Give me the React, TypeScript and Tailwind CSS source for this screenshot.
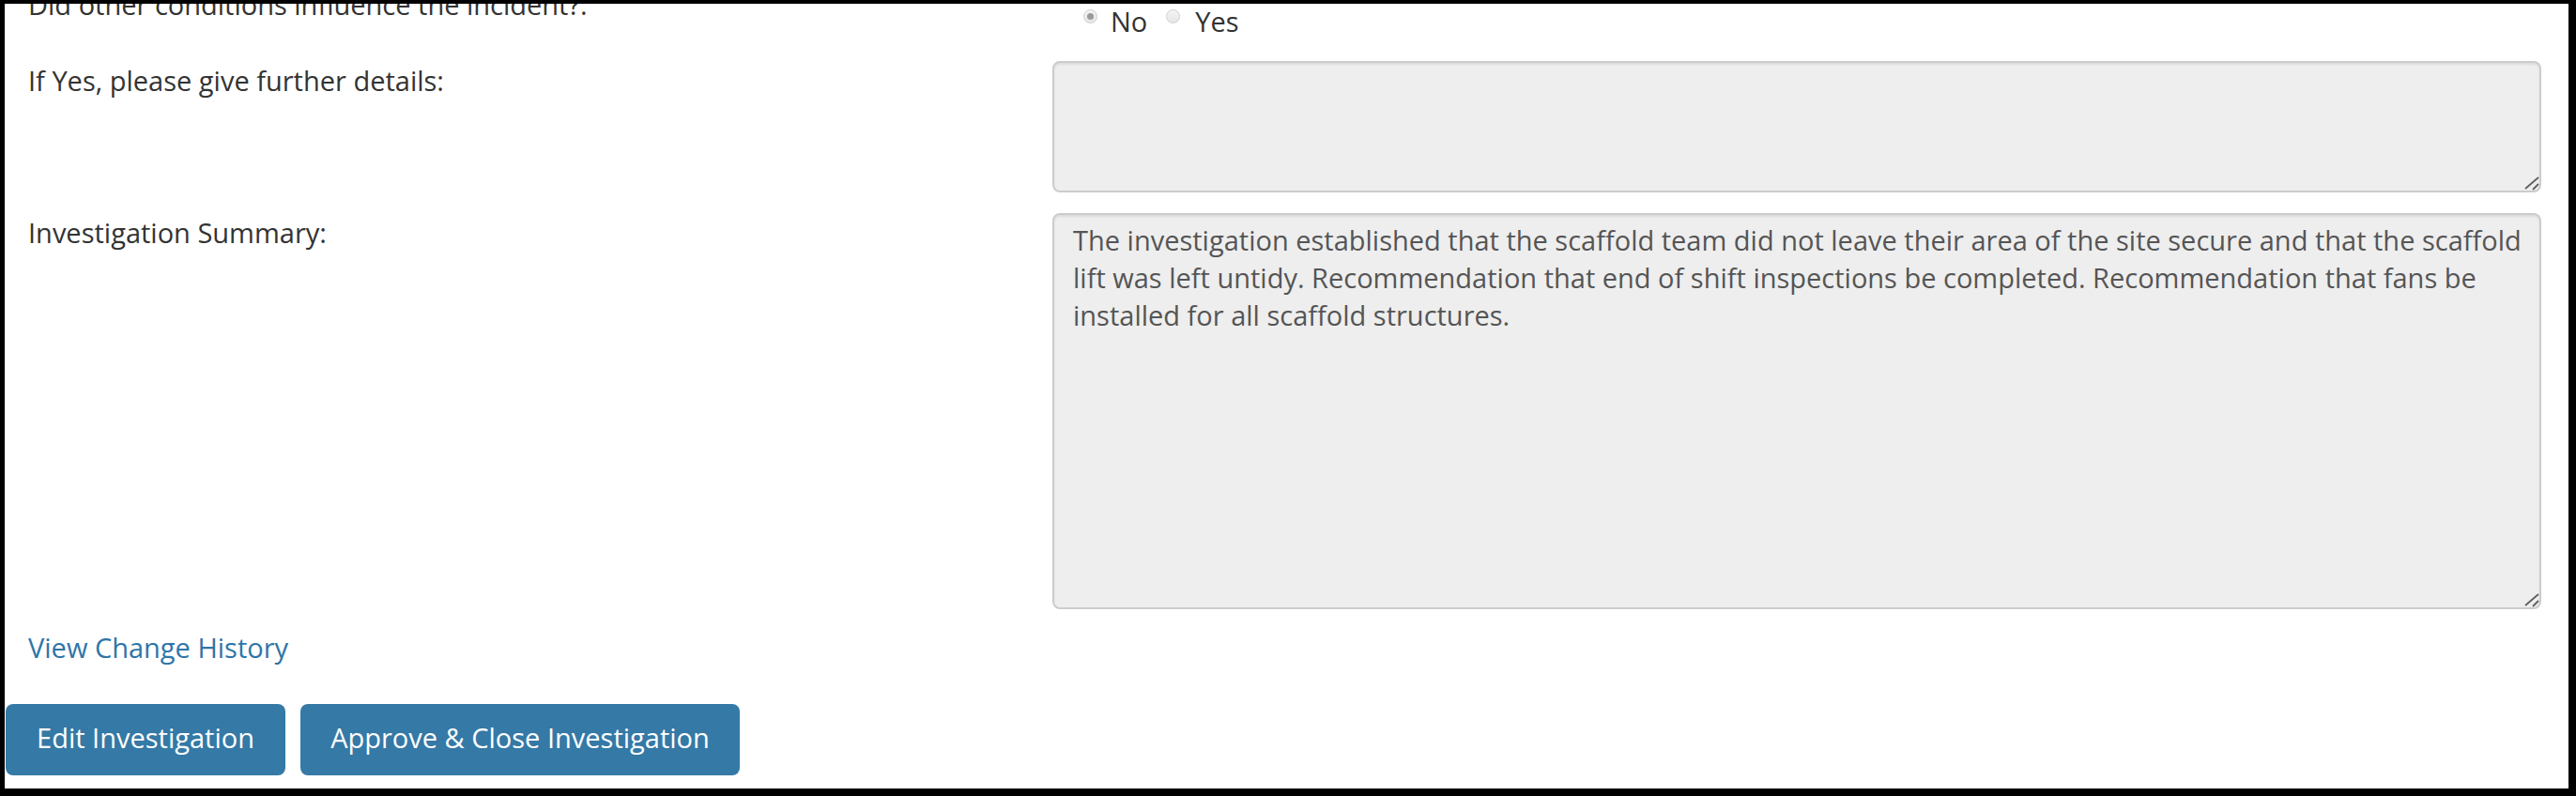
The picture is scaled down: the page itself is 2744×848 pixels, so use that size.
import React from "react";

function Radio({ checked }: { checked?: boolean }) {
  return (
    <div className="mt-[7px] h-[15px] w-[15px] shrink-0 rounded-full border border-[#cfcfcf] bg-gradient-to-b from-[#f4f4f4] to-[#e6e6e6] flex items-center justify-center">
      {checked && <div className="h-[7px] w-[7px] rounded-full bg-[#9a9a9a]" />}
    </div>
  );
}

function Handle() {
  return (
    <svg className="absolute right-0 bottom-0" width="18" height="18" viewBox="0 0 18 18">
      <line x1="3" y1="16" x2="17" y2="4" stroke="#5e5e5e" strokeWidth="1.8" />
      <line x1="11" y1="17" x2="17" y2="11" stroke="#5e5e5e" strokeWidth="1.8" />
    </svg>
  );
}

export default function App() {
  return (
    <div className="w-[2744px] h-[848px] bg-white border-black border-t-[4px] border-l-[5px] border-r-[8px] border-b-[8px] overflow-hidden font-['Open_Sans',sans-serif] text-[29px] leading-[40px] text-[#333333]">
      <div className="pl-[25px]">
        {/* Row 1 */}
        <div className="grid grid-cols-[1091px_1586px]">
          <div className="-mt-[19px]">Did other conditions influence the incident?:</div>
          <div className="-mt-[1px] flex items-start pl-[33px]">
            <Radio checked />
            <span className="ml-[14px]">No</span>
            <div className="ml-[20px]">
              <Radio />
            </div>
            <span className="ml-[16px]">Yes</span>
          </div>
        </div>

        {/* Row 2 */}
        <div className="mt-[22px] grid grid-cols-[1091px_1586px]">
          <div className="pt-[1px]">If Yes, please give further details:</div>
          <div className="relative h-[140px] rounded-[8px] border-2 border-[#cccccc] bg-[#eeeeee] shadow-[inset_0_2px_2px_rgba(0,0,0,0.075)]">
            <Handle />
          </div>
        </div>

        {/* Row 3 */}
        <div className="mt-[22px] grid grid-cols-[1091px_1586px]">
          <div className="pt-[1px]">Investigation Summary:</div>
          <div className="relative h-[422px] rounded-[8px] border-2 border-[#cccccc] bg-[#eeeeee] shadow-[inset_0_2px_2px_rgba(0,0,0,0.075)] pt-[7px] pl-[20px] pr-[8px] text-[#555555]">
            The investigation established that the scaffold team did not leave their area of the site secure and that the scaffold lift was left untidy. Recommendation that end of shift inspections be completed. Recommendation that fans be installed for all scaffold structures.
            <Handle />
          </div>
        </div>

        {/* Link */}
        <div className="mt-[21px]">
          <a className="text-[#2f75a8] cursor-pointer">View Change History</a>
        </div>

        {/* Buttons */}
        <div className="mt-[40px] -ml-[24px] flex gap-[16px]">
          <button className="h-[76px] w-[298px] rounded-[8px] bg-[#3579a6] text-white flex items-center justify-center pb-[4px]">
            Edit Investigation
          </button>
          <button className="h-[76px] w-[468px] rounded-[8px] bg-[#3579a6] text-white flex items-center justify-center pb-[4px]">
            Approve &amp; Close Investigation
          </button>
        </div>
      </div>
    </div>
  );
}
